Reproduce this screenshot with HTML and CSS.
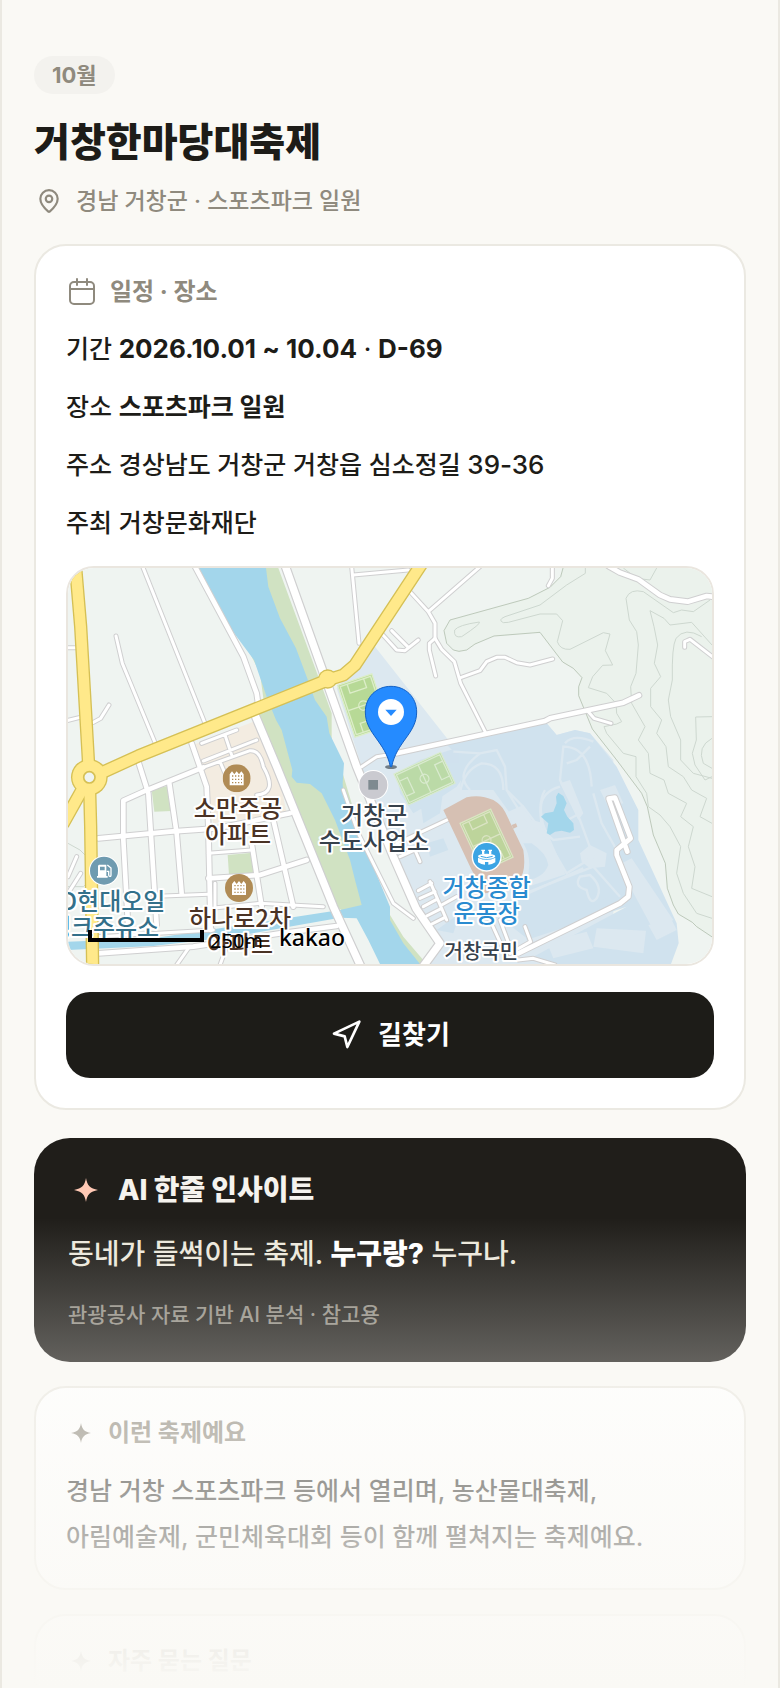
FILE: index.html
```html
<!DOCTYPE html>
<html lang="ko">

<head>
    <meta charset="UTF-8">
    <meta name="viewport" content="width=device-width, initial-scale=1.0">
    <title>거창한마당대축제</title>
    <link rel="stylesheet" href="styles.css">
</head>

<body>
    <!-- shared icons -->
    <svg class="sprite" aria-hidden="true">
        <symbol id="sparkle" viewBox="0 0 24 24">
            <path d="M12 0C13.200 7.500 16 10.500 24 12C16 13.500 13.200 16.500 12 24C10.800 16.500 8 13.500 0 12C8 10.500 10.800 7.500 12 0Z" fill="currentColor" />
        </symbol>
        <symbol id="building" viewBox="-42 -42 84 84">
            <circle r="42" fill="#b08b55" />
            <path d="M-21 21V-12L-14 -21L-7 -12L0 -21L7 -12L14 -21L21 -12V21Z" fill="#fff" />
            <path d="M-14 -7H16M-14 3H16M-14 13H16" stroke="#b08b55" stroke-width="4" stroke-dasharray="4 5" />
        </symbol>
    </svg>

    <main class="page">
        <header class="festival-header">
            <span class="month">10월</span>
            <h1>거창한마당대축제</h1>
            <p class="location">
                <svg class="icon-pin" viewBox="0 0 24 24" aria-hidden="true">
                    <path d="M20 10c0 5-5.500 10.200-7.400 11.800a1 1 0 0 1-1.200 0C9.500 20.200 4 15 4 10a8 8 0 0 1 16 0Z" />
                    <circle cx="12" cy="10" r="3" />
                </svg>
                <span>경남 거창군 · 스포츠파크 일원</span>
            </p>
        </header>

        <section class="card schedule">
            <h2 class="card-title">
                <svg class="icon-calendar" viewBox="0 0 32 32" aria-hidden="true">
                    <rect x="4" y="6" width="24" height="22" rx="4" />
                    <path d="M4 13h24M11 3v6M21 3v6" />
                </svg>
                <span>일정 · 장소</span>
            </h2>
            <p class="info">기간 <strong class="num">2026.10.01 ~ 10.04</strong> · <strong class="num">D-69</strong></p>
            <p class="info">장소 <strong>스포츠파크 일원</strong></p>
            <p class="info">주소 경상남도 거창군 거창읍 심소정길 <span class="num">39-36</span></p>
            <p class="info">주최 거창문화재단</p>

            <div class="map">
                <svg viewBox="24 24 1932 1188" preserveAspectRatio="xMidYMid slice" role="img" aria-label="지도">
                    <defs>
                        <g id="roadsWide">
                            <path d="M673 10L805 380L890 620L1000 890L1068 1045L1140 1150L1085 1225" />
                            <path d="M585 465L650 620L820 1040L905 1225" />
                        </g>
                        <g id="roadsMid">
                            <path d="M405 20L550 290L590 400L597 450" />
                            <path d="M395 550L440 680L445 800L452 1110" />
                            <path d="M235 605L265 700L290 1095" />
                            <path d="M205 1110L190 840V722L250 695L430 622" />
                            <path d="M328 670L350 820L365 1000" />
                            <path d="M115 835L330 815L470 805L690 760" />
                            <path d="M575 850L605 1040M640 780L700 1040" />
                            <path d="M445 955L600 945L740 900" />
                            <path d="M115 1180L400 1160L660 1120L830 1098" />
                            <path d="M1645 18L1680 38L1735 58L1800 105L1830 118L1883 125L1940 108L1960 110" />
                            <path d="M1010 580L1455 483L1470 475L1690 428L1737 406" />
                            <path d="M1375 1180L1680 1030L1705 1010L1708 980L1670 885L1670 870L1712 835L1665 713L1646 716L1702 875" />
                        </g>
                        <g id="roadsThin">
                            <path d="M248 20L435 490M168 228L187 310L290 560" />
                            <path d="M875 20L897 250M880 45L1045 30" />
                            <path d="M20 263H50M20 482L60 472M100 487L122 475L147 435" />
                            <path d="M425 550L530 510M495 525L515 585M430 603L590 540M430 622L570 572Q600 570 610 620Q655 700 590 705M480 605L495 640" />
                            <path d="M445 880L575 870M310 1008L445 1003M455 1045L600 1030L790 1040M465 970V1040M115 1130L460 1110" />
                            <path d="M385 1165L350 1215M500 1160L480 1215" />
                            <path d="M1260 20L1105 155M1050 95L1105 155L1125 190V235L1145 268L1183 305L1202 370L1278 520" />
                            <path d="M1125 235L1108 250V270L1127 348M1202 353L1260 332L1280 305L1310 292H1335L1370 308L1410 315L1478 297" />
                            <path d="M960 215L1010 270L1035 272L1075 240M995 212L1045 262" />
                            <path d="M1477 20V55L1465 77M1585 455L1602 475L1653 490M1874 262V245L1890 238L1960 292" />
                            <path d="M905 620L950 590L1000 582M1165 778L1050 832L1010 850" />
                            <path d="M1020 890L1065 870L1080 905M1075 992L1115 970M1080 1015L1125 995M1090 1040L1130 1018M1100 1068L1145 1045M1110 1095L1155 1072M1110 965L1160 1080M1145 1035L1190 1010" />
                            <path d="M1290 1080L1340 1190M1320 1080L1350 1160M1395 1100L1412 1145L1350 1180M1375 1200L1420 1195L1485 1215" />
                            <path d="M24 950L50 890M24 1000L62 940M850 690L895 820L1000 1030L1060 1075" />
                        </g>
                        <g id="roadsMain">
                            <path d="M46 10L62 200L88 650L92 800L98 1225" />
                            <path d="M88 655L235 588L803 360L850 345L885 315L1090 4" />
                            <path d="M88 650L10 790" />
                        </g>
                        <g id="pitch">
                            <path d="M0 0H108V164H0Z" fill="#b7d996" />
                            <path d="M6 6H102V158H6ZM6 82H102M28 6V34H80V6M28 158V130H80V158" />
                            <circle cx="54" cy="82" r="14" />
                        </g>
                    </defs>

                    <rect x="24" y="24" width="1932" height="1188" fill="#eff4f1" />

                    <!-- hills -->
                    <path class="hill" d="M1513 10L1502 50L1470 82L1405 115L1170 180L1152 212L1160 250L1180 270L1197 274L1220 270L1245 252L1302 228L1440 217L1508 306L1540 325L1566 353L1556 380V407L1597 507L1670 600L1745 700L1762 740L1780 825L1816 910L1822 985L1840 1035L1855 1062L1897 1087L1910 1100L1970 1140V10Z" />
                    <path class="contour" d="M1576 20V40L1520 75L1440 135L1335 170Q1312 180 1330 188L1345 187L1440 162H1490L1508 182L1492 245Q1500 270 1530 268L1630 218L1650 222L1636 272L1658 315L1628 316L1598 350L1585 383L1640 400L1668 430L1670 460L1685 485L1670 492L1632 500L1640 520L1690 580L1728 590V650L1760 700L1765 740L1800 765L1830 800L1862 860L1850 940L1870 1000L1910 1060L1956 1075" />
                    <path class="contour" d="M1950 120L1900 155L1865 150L1840 158L1800 130L1750 95Q1710 85 1698 115L1708 180L1730 215L1735 255L1728 340L1712 380L1715 430L1755 500L1735 540L1765 580L1770 640L1812 660L1825 700L1880 730L1862 770L1900 800L1885 860L1905 920L1895 985L1956 1010" />
                    <path class="contour" d="M1956 255L1895 187L1830 195L1812 175L1770 152L1782 200L1793 255L1783 310L1802 350L1772 385V440L1805 480L1790 520L1818 560L1825 620L1870 650L1895 690L1940 715L1920 770L1956 790" />
                    <path class="contour" d="M1925 230Q1875 200 1848 235Q1835 260 1837 360L1825 420L1832 470L1862 540V600L1900 640L1956 655M1956 470L1907 471L1909 540L1897 580L1905 615L1935 660L1956 650M1956 535Q1910 560 1930 610L1956 625M1184 210Q1195 195 1258 186Q1265 190 1205 230Q1180 235 1184 210ZM1790 24L1770 60L1730 55L1690 24" />

                    <!-- sports park -->
                    <path fill="#dce8f0" d="M937 250L1165 540L1460 490L1490 525L1545 510L1590 520L1660 600V1212H1110L1140 1150L1070 1050L1000 890L905 620L830 385Z" />
                    <path fill="#d0e2ee" d="M1150 545L1460 490L1490 525L1545 510L1590 520L1670 620L1735 750V840L1850 1090L1856 1150L1833 1212H1480L1420 1190L1700 1040L1400 1140L1370 1030L1520 950L1450 790L1350 760L1300 690L1200 690L1210 600Z" />
                    <path fill="#d0e2ee" d="M1010 640L1080 600L1200 560L1230 620L1190 680L1130 720L1060 760L1020 700ZM1080 720L1150 690L1140 760L1090 790ZM1100 850L1150 835L1165 870L1110 890ZM1390 985L1600 915L1650 1010L1400 1135L1330 1080ZM1130 1110L1200 1060L1180 1120ZM1415 850Q1460 880 1465 915Q1450 955 1400 960Q1420 900 1390 850Z" />
                    <path fill="#dce8f0" d="M1345 755L1390 735L1420 790L1370 830ZM1560 880L1590 855L1640 880L1635 920L1590 925L1565 905Z" />
                    <path class="park-path" d="M1180 575L1260 580L1310 570L1335 620L1340 690L1390 740L1450 820L1560 760M1260 580Q1180 640 1230 690M1340 690Q1390 780 1450 830M1455 690Q1430 730 1450 820L1520 940L1600 890L1560 780L1500 660L1510 560Q1590 560 1595 680M1520 610L1550 600L1590 560M1515 550Q1540 520 1600 545M1600 700L1625 790L1670 870M1370 1010L1600 920L1680 1010" />
                    <path class="park-path" d="M1200 700Q1210 630 1265 610Q1330 610 1330 690M1500 680Q1430 700 1445 770Q1450 820 1480 840L1560 830M1370 1015L1570 925" />
                    <path fill="#dce8f0" d="M1620 690L1665 675L1690 730L1645 740ZM1610 1105L1758 1112L1750 1180L1600 1160ZM1765 1095L1835 1080L1850 1110L1790 1140ZM1460 1145L1580 1115L1600 1165L1480 1195ZM1675 915L1715 895L1840 1080L1780 1110ZM1500 670L1530 660L1570 760L1555 780Z" />
                    <path fill="#a3d6eb" d="M1495 698L1510 708L1520 730L1512 750L1522 770L1540 790L1542 810L1530 818L1505 812L1485 815L1470 825L1460 820L1465 790L1443 770L1455 760L1480 755L1490 730L1488 710Z" />
                    <path class="park-path" d="M1560 950Q1540 980 1580 990Q1590 1040 1610 1015Q1630 980 1590 945Z" />

                    <!-- river -->
                    <path fill="#d0e2c2" d="M415 24L457 62L520 190L550 240L600 340L612 430L590 480L660 620L815 1000L835 1045L900 1080L960 1200L1000 1212H1100L1030 1130L990 1065L905 830L848 640L815 540V460L775 350L655 24Z" />
                    <path fill="#a3d6eb" d="M418 24L435 60L500 190L582 300L620 410L648 480L665 510L697 630L695 650L710 668L750 672L785 700L825 780L870 900L885 960L905 1035L840 1050L460 1108L280 1135L24 1145V1170L280 1158L520 1130L840 1073L890 1075L925 1140L960 1212H1080L1030 1150L990 1080V1040L940 920L905 830L885 765L850 710L848 670L852 610L808 520L800 470L765 420L740 350L708 265L660 175L625 80L618 24Z" />

                    <!-- blocks -->
                    <path fill="#f3ece1" d="M400 555L580 485L655 640L680 760L460 790L440 690Z" />
                    <path fill="#d0e2c2" d="M275 690L333 675L335 753L283 755ZM503 885L578 878L583 945H507Z" />
                    <path class="contour" d="M24 850L60 870L90 900M24 980H70L90 960" />

                    <use href="#roadsThin" class="thin-edge" />
                    <use href="#roadsMid" class="mid-edge" />
                    <use href="#roadsWide" class="wide-edge" />
                    <use href="#roadsThin" class="thin-fill" />
                    <use href="#roadsMid" class="mid-fill" />
                    <use href="#roadsWide" class="wide-fill" />

                    <use href="#roadsMain" class="main-edge" />
                    <circle cx="803" cy="357" r="29" fill="#d5c055" />
                    <circle cx="88" cy="652" r="55" fill="#d5c055" />
                    <use href="#roadsMain" class="main-fill" />
                    <circle cx="803" cy="357" r="25" fill="#ffe98a" />
                    <circle cx="88" cy="652" r="51" fill="#ffe98a" />
                    <circle cx="88" cy="652" r="17" fill="#eff4f1" stroke="#d5c055" stroke-width="5" />

                    <!-- stadium and pitches -->
                    <path fill="#d6c0b3" d="M1150 750L1220 712Q1260 702 1300 720Q1325 735 1335 755L1390 870Q1400 940 1375 960Q1340 995 1275 1000L1235 930ZM1355 795L1368 790L1372 800L1360 806Z" />
                    <use href="#pitch" class="pitch" transform="translate(833 376) rotate(-18.500)" />
                    <use href="#pitch" class="pitch dim" transform="translate(1002 642) rotate(-25) matrix(0 .95 .94 0 0 0)" />
                    <use href="#pitch" class="pitch dim" transform="translate(1200 790) rotate(-25) scale(.94 .97)" />

                    <!-- places -->
                    <use href="#building" x="488" y="613" width="84" height="84" />
                    <use href="#building" x="495" y="942" width="84" height="84" />
                    <g transform="translate(132 932)">
                        <circle r="45" fill="#fff" />
                        <circle r="42" fill="#6f9bb0" />
                        <path d="M-15 -18H7V16H11V21H-21V16H-18V-15Z" fill="#fff" />
                        <path d="M-12 -12H2V-1H-12Z" fill="#6f9bb0" />
                        <path d="M10 -17L21 -8V13Q21 18 17 17Q14 16 14 12V2H8" fill="none" stroke="#fff" stroke-width="4" />
                    </g>
                    <g transform="translate(940 675)">
                        <circle r="45" fill="#fff" />
                        <circle r="42" fill="#cacad0" />
                        <path d="M-15 -15H14V14H-15Z" fill="#7e8a90" />
                    </g>
                    <g transform="translate(1280 890)">
                        <circle r="45" fill="#fff" />
                        <circle r="41" fill="#3ba4e4" />
                        <path d="M-16 -21H-5V-17H-7V-8H-14V-17H-16ZM5 -21H16V-17H14V-8H7V-17H5Z" fill="#fff" />
                        <ellipse cy="-1" rx="26" ry="8" fill="#fff" />
                        <path d="M-26 3Q0 16 26 3V17Q16 24 5 24V16H-5V24Q-16 24 -26 17Z" fill="#fff" />
                        <path d="M-18 -1Q0 7 18 -1" fill="none" stroke="#3ba4e4" stroke-width="3" />
                    </g>

                    <g class="place-label">
                        <text class="brown" x="534" y="771">소만주공</text>
                        <text class="brown" x="534" y="849">아파트</text>
                        <text class="slate" x="942" y="792">거창군</text>
                        <text class="slate" x="942" y="870">수도사업소</text>
                        <text class="teal" x="132" y="1050">HD현대오일</text>
                        <text class="teal" x="132" y="1128">뱅크주유소</text>
                        <text class="brown" x="540" y="1102">하나로2차</text>
                        <text class="brown" x="540" y="1180">아파트</text>
                        <text class="blue" x="1280" y="1008">거창종합</text>
                        <text class="blue" x="1280" y="1086">운동장</text>
                        <text class="slate small" x="1264" y="1196">거창국민</text>
                    </g>

                    <!-- marker -->
                    <ellipse cx="993" cy="621" rx="18" ry="6" fill="#56616b" opacity=".8" />
                    <path d="M993 379C949 379 916 412 916 456C916 520 976 545 991 620H995C1010 545 1070 520 1070 456C1070 412 1037 379 993 379Z" fill="#258bff" stroke="#1360c4" stroke-width="3" />
                    <circle cx="993" cy="456" r="39" fill="#fff" />
                    <path d="M976 449H1010L993 468Z" fill="#258bff" />

                    <!-- scale -->
                    <path d="M90 1110V1140H426V1110" fill="none" stroke="#000" stroke-width="12" />
                    <text class="scale-text" x="450" y="1164">250m</text>
                    <text class="brand-text" x="657" y="1157">kakao</text>
                </svg>
            </div>

            <button type="button" class="route-btn">
                <svg viewBox="0 0 24 24" aria-hidden="true">
                    <path d="M3 11L22 2L13 21L11 13Z" />
                </svg>
                <span>길찾기</span>
            </button>
        </section>

        <section class="insight">
            <h2>
                <svg aria-hidden="true"><use href="#sparkle" /></svg>
                <span>AI 한줄 인사이트</span>
            </h2>
            <p class="insight-text">동네가 들썩이는 축제. <strong>누구랑?</strong> 누구나.</p>
            <p class="insight-note">관광공사 자료 기반 AI 분석 · 참고용</p>
        </section>

        <section class="card about">
            <h2 class="card-title">
                <svg class="icon-star" aria-hidden="true"><use href="#sparkle" /></svg>
                <span>이런 축제예요</span>
            </h2>
            <p>경남 거창 스포츠파크 등에서 열리며, 농산물대축제, 아림예술제, 군민체육대회 등이 함께 펼쳐지는 축제예요.</p>
        </section>

        <section class="card faq">
            <h2 class="card-title">
                <svg class="icon-star" aria-hidden="true"><use href="#sparkle" /></svg>
                <span>자주 묻는 질문</span>
            </h2>
        </section>

        <div class="fade"></div>
    </main>
</body>

</html>
```

FILE: styles.css
```css
* {
    box-sizing: border-box;
}

body {
    margin: 0;
    background: #faf9f5;
    color: #1d1c18;
    font-family: Inter, "Noto Sans CJK KR", sans-serif;
    font-size: 25px;
    font-weight: 500;
    font-optical-sizing: none;
    line-height: 38px;
}

h1, h2, p {
    margin: 0;
}

.sprite {
    position: absolute;
    width: 0;
    height: 0;
}

.page {
    position: relative;
    height: 100vh;
    overflow: hidden;
    padding: 56px 32px 0;
    border: solid #ebe9e2;
    border-width: 0 2px;
}

/* Header */
.festival-header {
    margin-bottom: 24px;
}

.month {
    display: inline-block;
    padding: 0 18px;
    border-radius: 19px;
    background: #f3f2ee;
    color: #8f8a7e;
    font-size: 22px;
    font-weight: 700;
    vertical-align: top;
}

h1 {
    margin-top: 20px;
    font-size: 39px;
    font-weight: 800;
    line-height: 56px;
}

.location {
    display: flex;
    align-items: center;
    gap: 12px;
    margin-top: 12px;
    color: #8f8a7e;
    font-size: 23px;
}

.icon-pin {
    width: 30px;
    height: 26px;
}

.icon-pin, .icon-calendar {
    flex: none;
    fill: none;
    stroke: currentColor;
    stroke-width: 2;
    stroke-linecap: round;
    stroke-linejoin: round;
}

/* Cards */
.card {
    margin-bottom: 24px;
    padding: 26px 30px 28px;
    border: 2px solid #ebe9e2;
    border-radius: 32px;
    background: #fff;
}

.card-title {
    display: flex;
    align-items: center;
    gap: 12px;
    color: #8f8a7e;
    font-size: 24px;
    font-weight: 700;
}

.icon-calendar {
    width: 32px;
    height: 32px;
}

.icon-star {
    flex: none;
    width: 30px;
    height: 20px;
}

.schedule {
    margin-bottom: 28px;
    padding: 27px 30px 30px;
}

.info {
    height: 40px;
    margin-top: 18px;
    line-height: 40px;
}

.info strong {
    font-weight: 700;
}

.info .num {
    font-size: 26px;
}

/* Map */
.map {
    height: 400px;
    margin-top: 23px;
    overflow: hidden;
    border: 2px solid #eae6df;
    border-radius: 28px;
}

.map svg {
    display: block;
    width: 100%;
    height: 100%;
}

.hill {
    fill: #ebf2ec;
    stroke: #a4b3a0;
    stroke-width: 2;
}

.contour {
    fill: none;
    stroke: #cdd7cf;
    stroke-width: 3;
}

.park-path {
    fill: none;
    stroke: #dce8f0;
    stroke-width: 7;
}

.thin-edge, .mid-edge, .wide-edge, .main-edge,
.thin-fill, .mid-fill, .wide-fill, .main-fill {
    fill: none;
    stroke-linecap: round;
    stroke-linejoin: round;
}

.thin-edge, .mid-edge, .wide-edge {
    stroke: #cfcfd0;
}

.thin-fill, .mid-fill, .wide-fill {
    stroke: #fff;
}

.thin-edge {
    stroke-width: 15;
}

.thin-fill {
    stroke-width: 9;
}

.mid-edge {
    stroke-width: 20;
}

.mid-fill {
    stroke-width: 14;
}

.wide-edge {
    stroke-width: 29;
}

.wide-fill {
    stroke-width: 22;
}

.main-edge {
    stroke: #d5c055;
    stroke-width: 40;
}

.main-fill {
    stroke: #ffe98a;
    stroke-width: 32;
}

.pitch {
    fill: none;
    stroke: #dcedc8;
    stroke-width: 4;
}

.dim {
    opacity: .8;
}

.place-label text {
    font-family: "Noto Sans CJK KR", sans-serif;
    font-size: 72px;
    font-weight: 500;
    text-anchor: middle;
    paint-order: stroke;
    stroke: #fff;
    stroke-width: 12px;
    stroke-linejoin: round;
}

.place-label .small {
    font-size: 60px;
}

.brown {
    fill: #4b3325;
}

.slate {
    fill: #36414c;
}

.teal {
    fill: #33708a;
}

.blue {
    fill: #298bd0;
}

.scale-text {
    font-family: "Noto Sans", sans-serif;
    font-size: 60px;
    font-weight: 400;
}

.brand-text {
    font-family: "Noto Sans", sans-serif;
    font-size: 69px;
    font-weight: 500;
    paint-order: stroke;
    stroke: #fff;
    stroke-width: 6px;
}

.route-btn {
    display: flex;
    align-items: center;
    justify-content: center;
    gap: 16px;
    width: 100%;
    height: 86px;
    margin-top: 26px;
    border: 0;
    border-radius: 24px;
    background: #1d1c18;
    color: #fff;
    font: inherit;
    font-size: 26px;
    font-weight: 700;
    cursor: pointer;
}

.route-btn svg {
    width: 32px;
    height: 32px;
    fill: none;
    stroke: currentColor;
    stroke-width: 2;
    stroke-linejoin: round;
}

/* AI insight */
.insight {
    margin-bottom: 24px;
    padding: 32px 34px 29px;
    border-radius: 36px;
    background: #201e1a;
}

.insight h2 {
    display: flex;
    align-items: center;
    gap: 14px;
    color: #f5f3ee;
    font-size: 28px;
    font-weight: 800;
    line-height: 40px;
}

.insight h2 svg {
    width: 36px;
    height: 24px;
    color: #ffc9b5;
}

.insight-text {
    margin-top: 21px;
    color: #ece8dc;
    font-size: 28px;
    line-height: 46px;
}

.insight-text strong {
    color: #fff;
    font-weight: 800;
}

.insight-note {
    margin-top: 20px;
    color: #928e84;
    font-size: 21px;
    line-height: 36px;
}

.about p {
    margin-top: 16px;
    line-height: 46px;
    word-break: keep-all;
}

.fade {
    position: absolute;
    right: -2px;
    bottom: 0;
    left: -2px;
    height: 470px;
    background: linear-gradient(rgba(250, 249, 245, 0), #faf9f5);
    pointer-events: none;
}
```
